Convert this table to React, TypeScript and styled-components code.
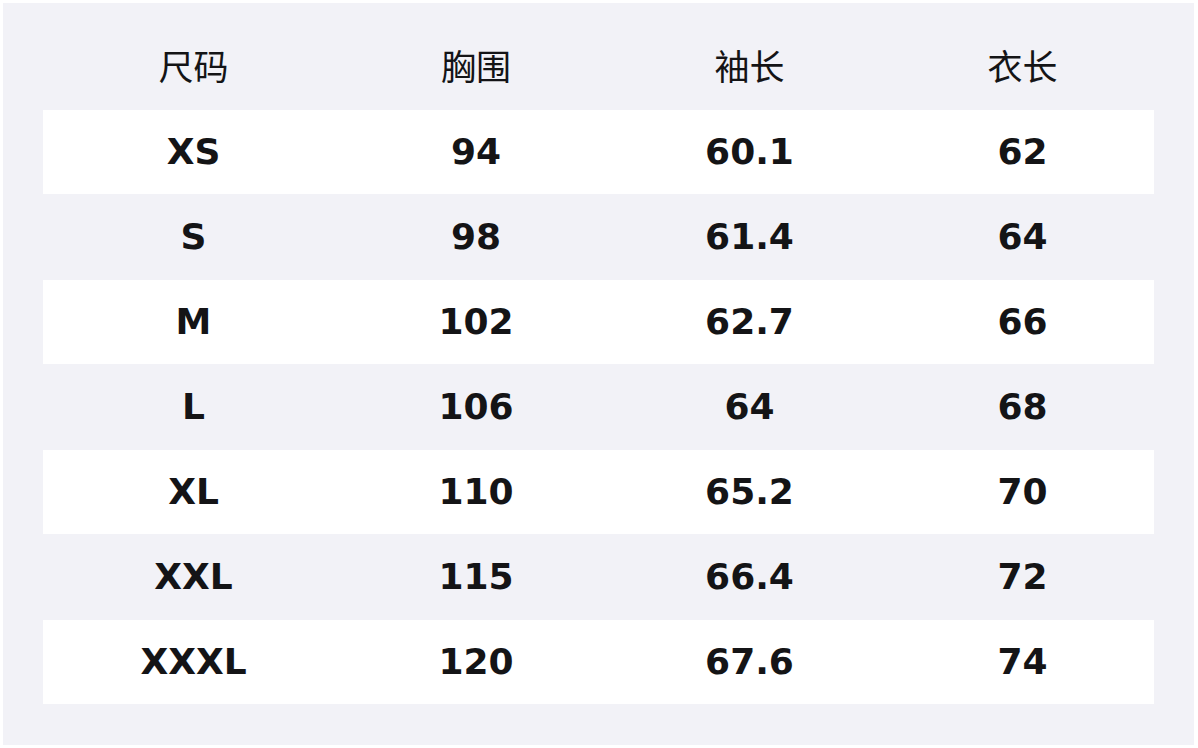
import styled, { createGlobalStyle } from "styled-components";

const GlobalStyle = createGlobalStyle`
  html, body {
    margin:0;
    padding:0;
    background:#ffffff;
  }
  body {
    font-family:"DejaVu Sans", "Noto Sans CJK SC", sans-serif;
    color:#141416;
  }
`

const Page = styled.div`
  width:1198px;
  height:748px;
  padding:3px 4px 3px 3px;
  box-sizing:border-box;
`

const Panel = styled.div`
  height:100%;
  box-sizing:border-box;
  background-color:#f2f2f7;
  padding:22px 40px 40px 40px;
`

const SizeTable = styled.div`
  display:grid;
  grid-template-columns:301px 264px 283px 1fr;
  row-gap:1px;
`

const Row = styled.div<{ $striped?: boolean }>`
  display:contents;
  & > div {
    background-color:${(p) => (p.$striped ? "#ffffff" : "transparent")};
  }
`

const HeadCell = styled.div`
  height:84px;
  display:flex;
  align-items:center;
  justify-content:center;
  font-family:"DejaVu Sans", "Noto Sans CJK SC", sans-serif;
  font-size:35px;
  font-weight:400;
  color:#141416;
  padding-bottom:5px;
  box-sizing:border-box;
`

const Cell = styled.div`
  height:84px;
  display:flex;
  align-items:center;
  justify-content:center;
  font-family:"DejaVu Sans", sans-serif;
  font-size:36px;
  font-weight:700;
  color:#141416;
  padding-bottom:2px;
  box-sizing:border-box;
`

const headers = ["尺码", "胸围", "袖长", "衣长"];

const sizes = [
  ["XS", "94", "60.1", "62"],
  ["S", "98", "61.4", "64"],
  ["M", "102", "62.7", "66"],
  ["L", "106", "64", "68"],
  ["XL", "110", "65.2", "70"],
  ["XXL", "115", "66.4", "72"],
  ["XXXL", "120", "67.6", "74"],
];

const App = () => {
  return (
    <Page>
      <GlobalStyle />
      <Panel>
        <SizeTable>
          <Row>
            {headers.map((h) => (
              <HeadCell key={h}>{h}</HeadCell>
            ))}
          </Row>
          {sizes.map((row, i) => (
            <Row key={row[0]} $striped={i % 2 === 0}>
              {row.map((v, j) => (
                <Cell key={j}>{v}</Cell>
              ))}
            </Row>
          ))}
        </SizeTable>
      </Panel>
    </Page>
  );
};

export default App;
